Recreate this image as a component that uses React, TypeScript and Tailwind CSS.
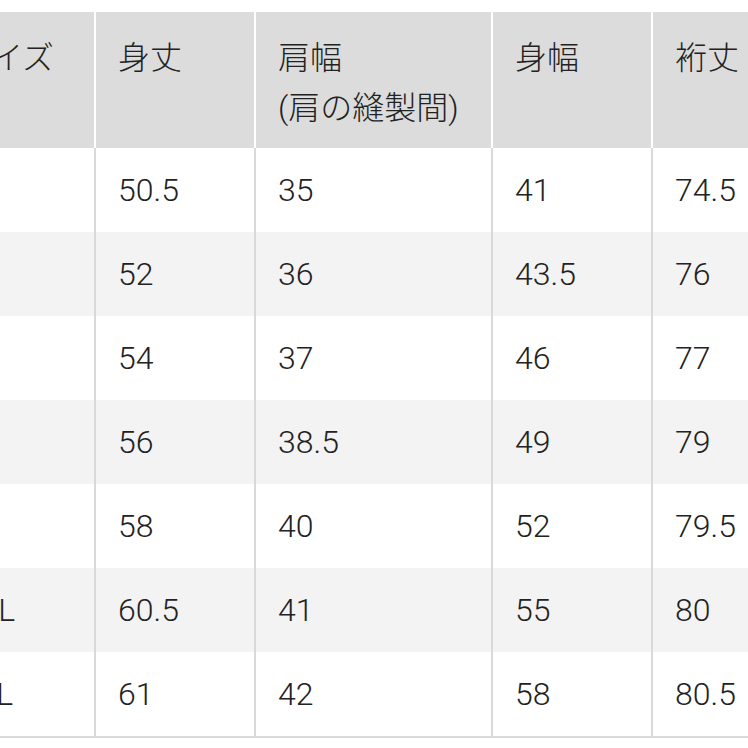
import React from 'react';

const rows = [
  ['XS', '50.5', '35', '41', '74.5'],
  ['S', '52', '36', '43.5', '76'],
  ['M', '54', '37', '46', '77'],
  ['L', '56', '38.5', '49', '79'],
  ['XL', '58', '40', '52', '79.5'],
  ['XXL', '60.5', '41', '55', '80'],
  ['3XL', '61', '42', '58', '80.5'],
];

const widths = ['w-[157px]', 'w-[160px]', 'w-[237px]', 'w-[160px]', 'w-[160px]'];

export default function App() {
  return (
    <div
      className="w-[748px] h-[748px] overflow-hidden bg-white pt-[12px] text-[#222] text-[32px] font-light"
      style={{ fontFamily: "Roboto, 'Noto Sans CJK JP', sans-serif" }}
    >
      <div className="-ml-[63px] w-[900px]">
        {/* header */}
        <div className="flex h-[136px] bg-[#dcdcdc]">
          {['サイズ', '身丈', '肩幅\n(肩の縫製間)', '身幅', '裄丈'].map((h, i) => (
            <div
              key={i}
              className={`${widths[i]} shrink-0 pl-[22px] pt-[21px] leading-[50px] whitespace-pre-line ${i > 0 ? 'border-l-2 border-white' : ''}`}
            >
              {h}
            </div>
          ))}
        </div>

        {/* body */}
        <div className="border-b-2 border-[#d9d9d9]">
          {rows.map((r, ri) => (
            <div key={ri} className={`flex h-[84px] ${ri % 2 === 1 ? 'bg-[#f3f3f3]' : 'bg-white'}`}>
              {r.map((c, ci) => (
                <div
                  key={ci}
                  className={`${widths[ci]} shrink-0 pl-[22px] flex items-center ${ci > 0 ? 'border-l-2 border-[#d9d9d9]' : ''}`}
                >
                  {c}
                </div>
              ))}
            </div>
          ))}
        </div>
      </div>
    </div>
  );
}
